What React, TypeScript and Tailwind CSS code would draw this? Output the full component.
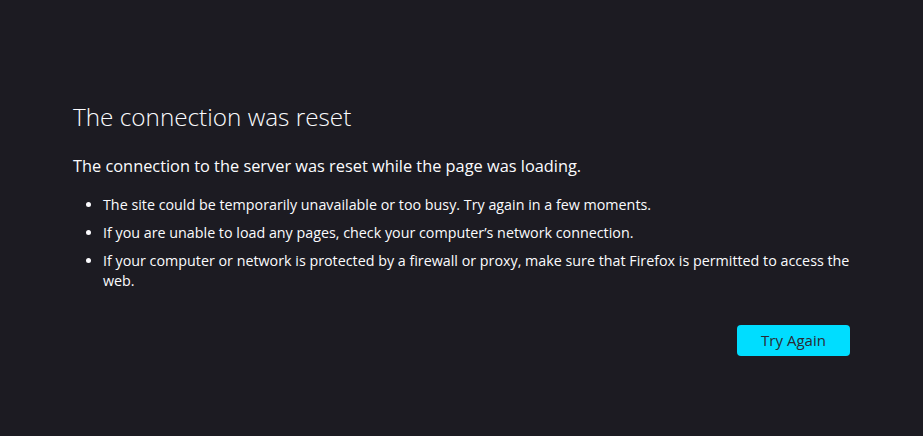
export default function App() {
  const items = [
    'The site could be temporarily unavailable or too busy. Try again in a few moments.',
    'If you are unable to load any pages, check your computer\u2019s network connection.',
    'If your computer or network is protected by a firewall or proxy, make sure that Firefox is permitted to access the web.',
  ]
  return (
    <div
      className="min-h-[436px] w-full bg-[#1c1b22] text-[#fbfbfe]"
      style={{ fontFamily: '"Open Sans", "Noto Sans", sans-serif' }}
    >
      <div className="ml-[73px] w-[777px] pt-[100px]">
        <h1 className="text-[24.3px] leading-[34px] font-light">The connection was reset</h1>
        <p className="mt-[20px] text-[16.35px] leading-[24px]">
          The connection to the server was reset while the page was loading.
        </p>
        <ul className="mt-[17px] mr-[-12px] list-disc pl-[30px] text-[14.3px] leading-[20px]">
          {items.map((t) => (
            <li key={t} className="mb-[8px]">
              {t}
            </li>
          ))}
        </ul>
        <div className="mt-[34px] flex justify-end">
          <button
            type="button"
            className="h-[31px] w-[113px] rounded-[4px] bg-[#00ddff] text-[15px] text-[#2b2a33]"
          >
            Try Again
          </button>
        </div>
      </div>
    </div>
  )
}
